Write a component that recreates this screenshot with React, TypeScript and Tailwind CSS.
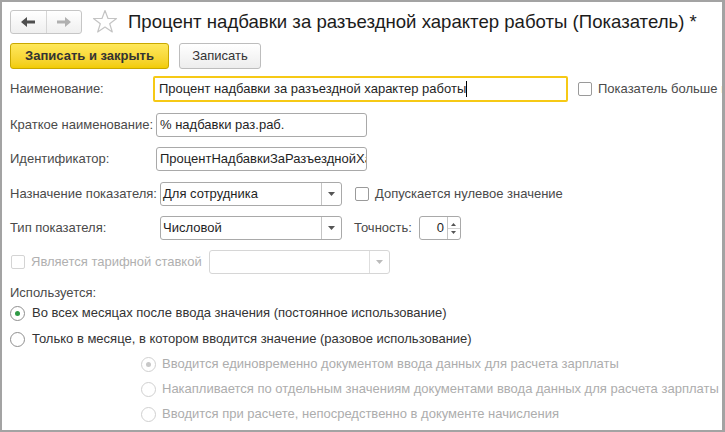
const font = { fontFamily: '"Liberation Sans", Arial, sans-serif' };

function Arrow({ dir, color }: { dir: 'left' | 'right'; color: string }) {
  return (
    <svg width="16" height="12" viewBox="0 0 16 12">
      <g transform={dir === 'right' ? 'translate(16,0) scale(-1,1)' : undefined}>
        <polygon points="1,6 7,1 7,4.5 15,4.5 15,7.5 7,7.5 7,11" fill={color} />
      </g>
    </svg>
  );
}

function Star() {
  return (
    <svg width="26" height="25" viewBox="0 0 26 25">
      <polygon
        points="13,1.5 16,9.5 24.5,9.5 17.7,14.8 20.3,23 13,18 5.7,23 8.3,14.8 1.5,9.5 10,9.5"
        fill="none"
        stroke="#c4c4c4"
        strokeWidth="1.2"
        strokeLinejoin="round"
      />
    </svg>
  );
}

function Checkbox({ disabled }: { disabled?: boolean }) {
  return (
    <div
      className={
        'w-[14px] h-[14px] rounded-[2px] border bg-white shrink-0 ' +
        (disabled ? 'border-[#d4d4d4]' : 'border-[#9a9a9a]')
      }
    />
  );
}

function Radio({ checked, disabled }: { checked?: boolean; disabled?: boolean }) {
  return (
    <div
      className={
        'w-[15px] h-[15px] rounded-full border bg-white flex items-center justify-center shrink-0 ' +
        (disabled ? 'border-[#d0d0d0]' : 'border-[#8f8f8f]')
      }
    >
      {checked && (
        <div className={'w-[5px] h-[5px] rounded-full ' + (disabled ? 'bg-[#c8c8c8]' : 'bg-[#2f9a45]')} />
      )}
    </div>
  );
}

function Caret({ disabled }: { disabled?: boolean }) {
  return (
    <svg width="7" height="4" viewBox="0 0 7 4">
      <polygon points="0,0 7,0 3.5,4" fill={disabled ? '#bbbbbb' : '#555555'} />
    </svg>
  );
}

function Select({ value, disabled, className }: { value?: string; disabled?: boolean; className: string }) {
  return (
    <div
      className={
        'h-[24px] flex shrink-0 rounded-[3px] border bg-white ' +
        (disabled ? 'border-[#d6d6d6] ' : 'border-[#a9a9a9] ') +
        className
      }
    >
      <div className="flex-1 flex items-center pl-[2px] text-[13px] text-[#1f1f1f] truncate">{value}</div>
      <div
        className={
          'w-[20px] border-l flex items-center justify-center ' +
          (disabled ? 'border-[#dedede]' : 'border-[#c4c4c4]')
        }
      >
        <Caret disabled={disabled} />
      </div>
    </div>
  );
}

function Label({ children, className }: { children: string; className?: string }) {
  return <div className={'shrink-0 text-[13px] text-[#4a4a4a] whitespace-nowrap ' + (className ?? '')}>{children}</div>;
}

export default function App() {
  return (
    <div
      className="w-[725px] h-[432px] bg-white border-t-2 border-l-2 border-r-[3px] border-b-2 border-[#a3a3a3] overflow-hidden flex flex-col pl-[8px]"
      style={font}
    >
      {/* header */}
      <div className="flex items-center h-[25px] mt-[7px] shrink-0">
        <div className="flex shrink-0 h-[24px] w-[72px] rounded-[3px] border border-[#c6c6c6] bg-gradient-to-b from-white to-[#efefef]">
          <div className="flex-1 flex items-center justify-center border-r border-[#d6d6d6]">
            <Arrow dir="left" color="#4f4f4f" />
          </div>
          <div className="flex-1 flex items-center justify-center">
            <Arrow dir="right" color="#b0b0b0" />
          </div>
        </div>
        <div className="ml-[10px] mt-[-1px] shrink-0">
          <Star />
        </div>
        <div className="ml-[10px] text-[18.6px] leading-[24px] text-[#1c1c1c] whitespace-nowrap">
          Процент надбавки за разъездной характер работы (Показатель) *
        </div>
      </div>

      {/* buttons */}
      <div className="flex items-center mt-[9px] h-[26px] shrink-0">
        <div className="h-[26px] w-[159px] shrink-0 rounded-[3px] border border-[#c9a800] bg-gradient-to-b from-[#ffe85a] to-[#f2cc00] flex items-center justify-center text-[13px] font-bold text-[#333333]">
          Записать и закрыть
        </div>
        <div className="ml-[10px] h-[26px] w-[82px] shrink-0 rounded-[3px] border border-[#bdbdbd] bg-gradient-to-b from-white to-[#ededed] flex items-center justify-center text-[13px] text-[#333333]">
          Записать
        </div>
      </div>

      {/* Наименование */}
      <div className="flex items-center mt-[7px] h-[26px] shrink-0">
        <Label className="w-[143px]">Наименование:</Label>
        <div className="w-[415px] h-[26px] shrink-0 border-2 border-[#f6c915] rounded-[2px] flex items-center pl-[4px] text-[13px] text-[#1f1f1f] whitespace-nowrap">
          Процент надбавки за разъездной характер работы
          <span className="inline-block w-px h-[16px] bg-black" />
        </div>
        <div className="ml-[10px] flex items-center shrink-0">
          <Checkbox />
          <span className="ml-[6px] text-[13px] text-[#4a4a4a] whitespace-nowrap">Показатель больше не используется</span>
        </div>
      </div>

      {/* Краткое наименование */}
      <div className="flex items-center mt-[11px] h-[24px] shrink-0">
        <Label className="w-[146px]">Краткое наименование:</Label>
        <div className="w-[211px] h-[24px] shrink-0 border border-[#a9a9a9] rounded-[3px] flex items-center pl-[3px] text-[13px] text-[#1f1f1f]">
          % надбавки раз.раб.
        </div>
      </div>

      {/* Идентификатор */}
      <div className="flex items-center mt-[10px] h-[24px] shrink-0">
        <Label className="w-[146px]">Идентификатор:</Label>
        <div className="w-[211px] h-[24px] shrink-0 border border-[#a9a9a9] rounded-[3px] flex items-center pl-[3px] text-[13px] text-[#1f1f1f] overflow-hidden whitespace-nowrap">
          ПроцентНадбавкиЗаРазъезднойХарактерРаботы
        </div>
      </div>

      {/* Назначение показателя */}
      <div className="flex items-center mt-[11px] h-[24px] shrink-0">
        <Label className="w-[150px]">Назначение показателя:</Label>
        <Select value="Для сотрудника" className="w-[182px]" />
        <div className="ml-[13px] flex items-center">
          <Checkbox />
          <span className="ml-[6px] text-[13px] text-[#4a4a4a] whitespace-nowrap">Допускается нулевое значение</span>
        </div>
      </div>

      {/* Тип показателя */}
      <div className="flex items-center mt-[10px] h-[24px] shrink-0">
        <Label className="w-[150px]">Тип показателя:</Label>
        <Select value="Числовой" className="w-[182px]" />
        <Label className="ml-[12px]">Точность:</Label>
        <div className="ml-[7px] w-[42px] h-[24px] shrink-0 border border-[#a9a9a9] rounded-[3px] flex bg-white">
          <div className="flex-1 flex items-center justify-end pr-[3px] text-[13px] text-[#1f1f1f]">0</div>
          <div className="w-[13px] border-l border-[#c4c4c4] flex flex-col">
            <div className="flex-1 flex items-end justify-center pb-[2px] border-b border-[#d4d4d4]">
              <svg width="5" height="3" viewBox="0 0 5 3">
                <polygon points="0,3 5,3 2.5,0" fill="#555" />
              </svg>
            </div>
            <div className="flex-1 flex items-start justify-center pt-[2px]">
              <svg width="5" height="3" viewBox="0 0 5 3">
                <polygon points="0,0 5,0 2.5,3" fill="#555" />
              </svg>
            </div>
          </div>
        </div>
      </div>

      {/* Является тарифной ставкой */}
      <div className="flex items-center mt-[10px] h-[24px] shrink-0">
        <div className="flex items-center w-[199px] shrink-0 pl-[1px]">
          <Checkbox disabled />
          <span className="ml-[6px] text-[13px] text-[#b0b0b0] whitespace-nowrap">Является тарифной ставкой</span>
        </div>
        <Select disabled className="w-[181px]" />
      </div>

      {/* Используется */}
      <div className="mt-[11px] text-[13px] leading-[16px] text-[#4a4a4a] shrink-0">Используется:</div>

      <div className="flex items-center mt-[3px] h-[18px] shrink-0">
        <Radio checked />
        <span className="ml-[7px] text-[13px] text-[#333333] whitespace-nowrap">
          Во всех месяцах после ввода значения (постоянное использование)
        </span>
      </div>
      <div className="flex items-center mt-[8px] h-[18px] shrink-0">
        <Radio />
        <span className="ml-[7px] text-[13px] text-[#333333] whitespace-nowrap">
          Только в месяце, в котором вводится значение (разовое использование)
        </span>
      </div>

      <div className="flex flex-col pl-[131px] shrink-0">
        {[
          { t: 'Вводится единовременно документом ввода данных для расчета зарплаты', c: true },
          { t: 'Накапливается по отдельным значениям документами ввода данных для расчета зарплаты', c: false },
          { t: 'Вводится при расчете, непосредственно в документе начисления', c: false },
        ].map((r) => (
          <div key={r.t} className="flex items-center mt-[7px] h-[18px]">
            <Radio checked={r.c} disabled />
            <span className="ml-[6px] text-[13px] text-[#adadad] whitespace-nowrap">{r.t}</span>
          </div>
        ))}
      </div>
    </div>
  );
}
